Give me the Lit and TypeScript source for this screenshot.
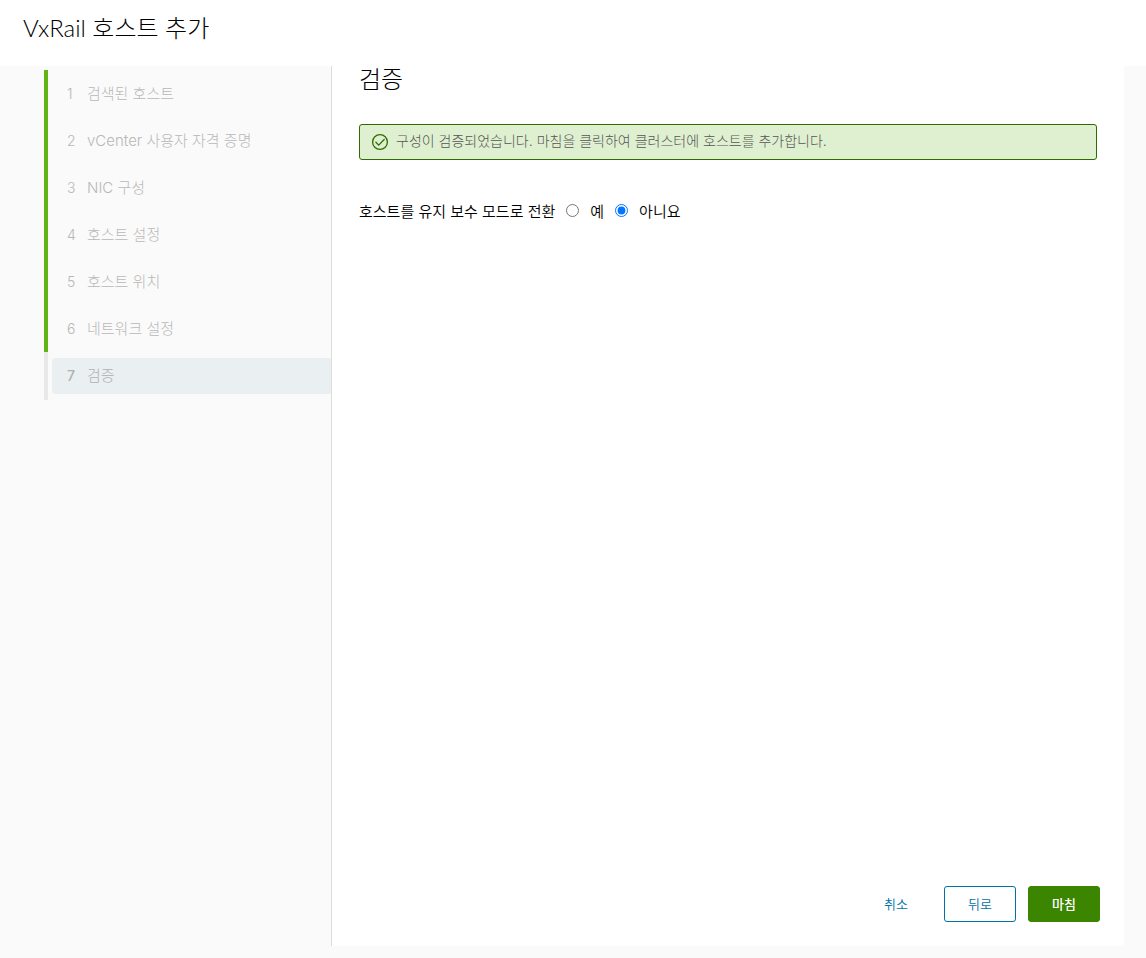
import { LitElement, html, css } from "lit";
import { customElement, property, state } from "lit/decorators.js";
import { classMap } from "lit/directives/class-map.js";

@customElement("wizard-steps")
class WizardSteps extends LitElement {
  @property({ type: Array }) steps: string[] = [];
  @property({ type: Number }) current = 0;

  static styles = css`
    :host {
      display: block;
      padding: 4px 0 0 44px;
    }
    .list {
      list-style: none;
      margin: 0;
      padding: 0;
    }
    .item {
      box-sizing: border-box;
      height: 47px;
      border-left: 4px solid #60b515;
      padding: 6px 0 5px 4px;
    }
    .item.current {
      height: 48px;
      border-left-color: #e8e8e8;
      padding-bottom: 6px;
    }
    .step {
      display: flex;
      align-items: center;
      width: 100%;
      height: 36px;
      margin: 0;
      padding: 0 12px 0 15px;
      border: 0;
      border-radius: 3px 0 0 3px;
      background: transparent;
      color: #b8b8b8;
      font-family: Inter, "Noto Sans CJK KR", sans-serif;
      font-size: 15px;
      font-weight: 300;
      line-height: 24px;
      text-align: left;
    }
    .current .step {
      background: #eaeff2;
      color: #b0b0b0;
    }
    .number {
      flex: none;
      width: 20px;
      font-size: 14px;
    }
    .current .number {
      font-weight: 500;
    }
  `;

  render() {
    return html`<ol class="list">
      ${this.steps.map(
        (name, i) => html`<li class=${classMap({ item: true, current: i === this.current })}>
          <button class="step" type="button" disabled>
            <span class="number">${i + 1}</span><span>${name}</span>
          </button>
        </li>`
      )}
    </ol>`;
  }
}

@customElement("app-root")
class AppRoot extends LitElement {
  @state() private maintenance = "no";

  private steps = [
    "검색된 호스트",
    "vCenter 사용자 자격 증명",
    "NIC 구성",
    "호스트 설정",
    "호스트 위치",
    "네트워크 설정",
    "검증",
  ];

  static styles = css`
    :host {
      display: flex;
      flex-direction: column;
      min-height: 100vh;
      background: #fafafa;
      color: #000;
      font-family: Inter, "Noto Sans CJK KR", sans-serif;
      font-weight: 300;
    }
    .header {
      background: #fff;
      padding: 12px 23px 22px;
    }
    .title,
    .heading {
      margin: 0;
      font-family: Lato, "Noto Sans CJK KR", sans-serif;
      font-size: 24px;
      line-height: 32px;
      font-weight: 300;
    }
    .body {
      flex: 1;
      display: grid;
      grid-template-columns: 331px minmax(0, 1fr);
      padding: 0 22px 12px 0;
    }
    .main {
      display: flex;
      flex-direction: column;
      border-left: 1px solid #ddd;
      border-radius: 0 0 3px 0;
      background: #fff;
    }
    .content {
      flex: 1;
      padding: 0 27px;
    }
    .heading {
      line-height: 26px;
    }
    .alert {
      display: flex;
      align-items: center;
      gap: 7px;
      margin-top: 32px;
      padding: 5px 11px;
      border: 1px solid #306b00;
      border-radius: 3px;
      background: #dff0d0;
      color: #565656;
      font-size: 14px;
      line-height: 22px;
    }
    .alert-icon {
      flex: none;
      width: 18px;
      height: 18px;
    }
    .alert-text {
      margin: 0;
      padding-bottom: 2px;
    }
    .options {
      display: flex;
      flex-wrap: wrap;
      align-items: center;
      gap: 11px;
      margin: 40px 0 0;
      font-size: 15px;
      line-height: 24px;
      font-weight: 350;
    }
    .radio {
      width: 13px;
      height: 13px;
      margin: 0 0 4px;
    }
    .footer {
      display: flex;
      justify-content: flex-end;
      gap: 12px;
      padding: 24px;
    }
    .btn {
      box-sizing: border-box;
      min-width: 72px;
      height: 36px;
      padding: 0 12px;
      border: 1px solid #0072a3;
      border-radius: 3px;
      background: #fff;
      color: #0072a3;
      font: inherit;
      font-size: 13px;
      font-weight: 350;
      line-height: 24px;
      cursor: pointer;
    }
    .btn.link {
      border-color: transparent;
    }
    .btn.primary {
      border-color: #3c8500;
      background: #3c8500;
      color: #fff;
      font-weight: 500;
    }
  `;

  private choice(value: string, label: string) {
    return html`<input
        class="radio"
        type="radio"
        name="maintenance"
        id=${value}
        .checked=${this.maintenance === value}
        @change=${() => (this.maintenance = value)}
      /><label for=${value}>${label}</label>`;
  }

  render() {
    return html`
      <header class="header"><h1 class="title">VxRail 호스트 추가</h1></header>
      <div class="body">
        <wizard-steps .steps=${this.steps} .current=${6}></wizard-steps>
        <main class="main">
          <section class="content">
            <h2 class="heading">검증</h2>
            <div class="alert" role="status">
              <svg class="alert-icon" viewBox="0 0 18 18" fill="none" stroke="#306b00" aria-hidden="true">
                <circle cx="9" cy="9" r="7.4" stroke-width="1.3" />
                <path d="M4.9 9.3 7.7 12.1 13.2 6.5" stroke-width="1.3" stroke-linecap="round" stroke-linejoin="round" />
              </svg>
              <p class="alert-text">구성이 검증되었습니다. 마침을 클릭하여 클러스터에 호스트를 추가합니다.</p>
            </div>
            <div class="options" role="radiogroup" aria-labelledby="mode">
              <span id="mode">호스트를 유지 보수 모드로 전환</span>
              ${this.choice("yes", "예")} ${this.choice("no", "아니요")}
            </div>
          </section>
          <footer class="footer">
            <button class="btn link" type="button">취소</button>
            <button class="btn" type="button">뒤로</button>
            <button class="btn primary" type="button">마침</button>
          </footer>
        </main>
      </div>
    `;
  }
}
